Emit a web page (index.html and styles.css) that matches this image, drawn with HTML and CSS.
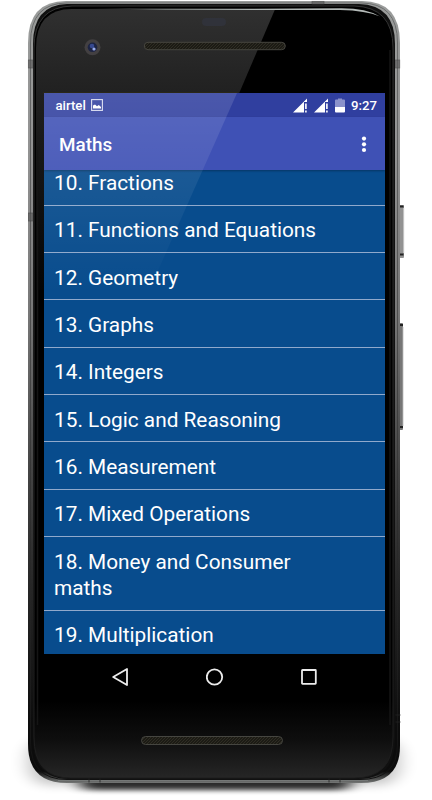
FILE: index.html
```html
<!DOCTYPE html>
<html lang="en">
<head>
<meta charset="utf-8">
<title>Maths</title>
<link rel="stylesheet" href="styles.css">
</head>
<body>
<div class="device">
  <svg class="frame" width="432" height="800" viewBox="0 0 432 800" aria-hidden="true">
    <defs>
      <linearGradient id="metal" x1="0" y1="0" x2="0" y2="1">
        <stop offset="0" stop-color="#9a9c9b"/><stop offset=".2" stop-color="#929292"/>
        <stop offset=".4" stop-color="#777"/><stop offset=".6" stop-color="#444"/>
        <stop offset=".75" stop-color="#262626"/><stop offset=".93" stop-color="#0c0c0c"/><stop offset=".985" stop-color="#0c0c0c"/><stop offset="1" stop-color="#747675"/>
      </linearGradient>
      <linearGradient id="rim" x1="0" y1="0" x2="0" y2="1">
        <stop offset="0" stop-color="#6c6e6e"/><stop offset=".3" stop-color="#5a5a5a"/><stop offset=".7" stop-color="#2b2b2b"/><stop offset="1" stop-color="#111"/>
      </linearGradient>
      <linearGradient id="glass" x1="0" y1="0" x2="0" y2="1">
        <stop offset="0" stop-color="#000"/><stop offset=".9" stop-color="#000"/><stop offset=".95" stop-color="#0e0e0e"/><stop offset="1" stop-color="#262626"/>
      </linearGradient>
      <linearGradient id="glareTop" x1="0" y1="0" x2="0" y2="1">
        <stop offset="0" stop-color="#303030"/><stop offset=".3" stop-color="#1f1f1f"/><stop offset="1" stop-color="#000"/>
      </linearGradient>
      <linearGradient id="shine" x1="0" y1="0" x2="1" y2="0">
        <stop offset="0" stop-color="#a8b0ae" stop-opacity="0"/><stop offset=".25" stop-color="#a8b0ae"/>
        <stop offset="1" stop-color="#b6bcba"/>
      </linearGradient>
      <linearGradient id="edge" x1="0" y1="0" x2="0" y2="1">
        <stop offset="0" stop-color="#333"/><stop offset="1" stop-color="#1c1c1c"/>
      </linearGradient>
      <pattern id="mesh" width="3" height="3" patternUnits="userSpaceOnUse">
        <rect width="3" height="3" fill="#1c1b15"/><path d="M0 3L3 0" stroke="#343127" stroke-width=".8"/>
      </pattern>
      <filter id="soft" x="-20%" y="-100%" width="140%" height="300%"><feGaussianBlur stdDeviation="9 2.500"/></filter>
      <filter id="wide" x="-20%" y="-100%" width="140%" height="300%"><feGaussianBlur stdDeviation="9 5"/></filter>
      <clipPath id="left"><path d="M0 0H279L155 290H0Z"/></clipPath>
    </defs>
    <rect x="28" y="738" width="372" height="47" rx="20" fill="#000" opacity=".22" filter="url(#wide)"/>
    <rect x="80" y="766" width="270" height="24" rx="8" fill="#000" opacity=".8" filter="url(#soft)"/>
    <rect x="399.500" y="205" width="4.500" height="53" rx="1" fill="#929292"/>
    <path d="M400 206.500h3.500M400 254.500h3.500" stroke="#222" stroke-width="2"/>
    <path d="M403.700 208v45" stroke="#ccc" stroke-width="1"/>
    <rect x="399.500" y="323" width="3.500" height="107" rx="1" fill="#777"/>
    <path d="M400 325h3M400 427h3" stroke="#222" stroke-width="2"/>
    <path d="M403 327v99" stroke="#bbb" stroke-width=".8"/>
    <path d="M66 1H362Q400 1 400 43V746Q400 783 361 783H67Q28 783 28 744V43Q28 1 66 1Z" fill="url(#metal)"/>
    <path d="M67 3H361Q397.500 3 397.500 43V744Q397.500 779.500 360 779.500H67Q30.500 779.500 30.500 742V43Q30.500 3 67 3Z" fill="none" stroke="url(#rim)" stroke-width="1"/>
    <path d="M67 4H359Q395 5 395 44V740Q395 779 358 779H69Q33 779 33 739V44Q33 5 67 4Z" fill="#101010"/>
    <path d="M72 6H354Q393 7 393 48V737Q393 778 354 778H71Q34 778 34 737V48Q34 7 72 6Z" fill="url(#glass)" stroke="url(#edge)" stroke-width="1"/>
    <path clip-path="url(#left)" d="M72 9H354Q391 9 391 48V320H36V48Q36 9 72 9Z" fill="url(#glareTop)"/>
    <path d="M390 50V725M37.500 150V725" stroke="#151515" stroke-width="1.500"/>
    <path d="M75 8.300Q205 9.300 340 8.300Q366 8 380 16.500Q366 10.500 340 10Q205 10.500 75 8.300Z" fill="url(#shine)"/>
    <path d="M58 780.500H368" stroke="#747776" stroke-width="1"/>
    <g fill="#555" stroke="#333" stroke-width=".7" opacity=".6">
      <rect x="28.300" y="60" width="4.500" height="8"/><rect x="395.500" y="60" width="4.300" height="8"/>
      <rect x="28.500" y="213" width="4.500" height="8"/><rect x="312" y="1.300" width="12" height="3"/>
    </g>
    <path d="M395.500 715h5M395.500 722h5M89 778.500v4M100 778.500v4M329 778.500v4M340 778.500v4" stroke="#252525" stroke-width=".8"/>
    <rect x="144.300" y="42.300" width="141" height="7.400" rx="3.700" fill="url(#mesh)" stroke="#46453f" stroke-width="1"/>
    <rect x="141.500" y="736.500" width="141" height="8" rx="4" fill="url(#mesh)" stroke="#454540" stroke-width="1"/>
    <rect x="202" y="18" width="24" height="8" rx="4" fill="#30323a"/>
    <circle cx="92.500" cy="47.300" r="8" fill="#434042"/>
    <circle cx="92.500" cy="47.300" r="4.800" fill="#1d2443"/>
    <circle cx="92" cy="46" r="2.300" fill="#374990"/><circle cx="94" cy="49" r="1.600" fill="#9aadef"/>
    <rect x="43" y="92.300" width="195" height="1" fill="#302b16"/>
  </svg>

  <main class="screen">
    <header class="status">
      <span class="carrier">airtel</span>
      <svg class="picture" width="12" height="12" viewBox="0 0 12 12"><rect x=".6" y=".6" width="10.800" height="10.800" fill="none" stroke="#d9dcf0" stroke-width="1.100"/><path d="M2 9.500V6.500L4 5.500l2 1.700L7.800 6 10 8V9.500Z" fill="#fff"/></svg>
      <span class="spacer"></span>
      <svg class="signal" width="15" height="15" viewBox="0 0 15 15"><path d="M0 14.500L14 .5V4H11V14.500Z" fill="#fff"/><path d="M12.900 5.500V11M12.900 12.500V14.500" stroke="#fff" stroke-width="1.600"/></svg>
      <svg class="signal second" width="15" height="15" viewBox="0 0 15 15"><path d="M0 14.500L14 .5V4H11V14.500Z" fill="#fff"/><path d="M12.900 5.500V11M12.900 12.500V14.500" stroke="#fff" stroke-width="1.600"/></svg>
      <svg class="battery" width="10" height="15" viewBox="0 0 10 15"><path d="M0 2.500Q0 1.500 1 1.500H3V.5H7V1.500H9Q10 1.500 10 2.500V9H0Z" fill="#8b92cb"/><path d="M0 9H10V13.500Q10 14.500 9 14.500H1Q0 14.500 0 13.500Z" fill="#fff"/></svg>
      <time class="clock">9:27</time>
    </header>
    <div class="appbar">
      <h1>Maths</h1>
      <svg width="6" height="18" viewBox="0 0 6 18" fill="#fff"><circle cx="3" cy="2.600" r="2.100"/><circle cx="3" cy="8.300" r="2.100"/><circle cx="3" cy="14" r="2.100"/></svg>
    </div>
    <ul class="topics">
      <li class="first">10. Fractions</li>
      <li>11. Functions and Equations</li>
      <li>12. Geometry</li>
      <li>13. Graphs</li>
      <li>14. Integers</li>
      <li>15. Logic and Reasoning</li>
      <li>16. Measurement</li>
      <li>17. Mixed Operations</li>
      <li class="double">18. Money and Consumer<br>maths</li>
      <li>19. Multiplication</li>
    </ul>
    <div class="glare"></div>
  </main>
  <nav class="navbar">
    <svg width="17" height="18" viewBox="0 0 17 18"><path d="M1.200 9L15 1V17Z"/></svg>
    <svg width="18" height="18" viewBox="0 0 18 18"><circle cx="8.500" cy="9" r="7.700"/></svg>
    <svg width="16" height="16" viewBox="0 0 16 16"><rect x="1" y="1" width="13.800" height="13.800" rx=".5"/></svg>
  </nav>
</div>
</body>
</html>
```
FILE: styles.css
```css
* { box-sizing: border-box; }
body { margin: 0; background: #fff; font-family: Roboto, sans-serif; color: #fff; }
.device { position: relative; width: 432px; height: 800px; padding: 93px 47px 0 44px; overflow: hidden; }
.frame { position: absolute; top: 0; left: 0; }
.screen { position: relative; width: 341px; height: 561px; overflow: hidden; background: #084c8d; }
svg { display: block; flex: none; }
.status { display: flex; align-items: center; height: 24px; padding: 0 8px 0 11.5px; background: #303f9f; }
.carrier, .clock { font-size: 13.2px; font-weight: 500; line-height: 24px; }
.clock { margin-left: 6px; padding-top: 1px; }
.carrier { padding-top: 1px; }
.picture { margin-left: 5px; }
.spacer { flex: 1; }
.second { margin-left: 6px; }
.battery { margin-left: 6px; }
.appbar { position: relative; display: flex; align-items: center; justify-content: space-between; height: 53px; padding: 2px 18px 0 15px; background: #3f51b5; box-shadow: 0 1px 2px rgba(0, 0, 0, .3); }
h1 { margin: 0; font-size: 18.9px; font-weight: 500; line-height: 24px; }
.topics { margin: 0; padding: 0; list-style: none; font-size: 20.8px; line-height: 26px; }
.topics li { height: 47.35px; padding: 11.8px 10px 0; border-bottom: 1px solid #90a9cc; white-space: nowrap; }
.topics .first { height: 35.6px; padding-top: 0; }
.topics .double { height: 73.6px; }
.glare { position: absolute; inset: 0; background: linear-gradient(180deg, rgba(255, 255, 255, .13), rgba(255, 255, 255, .08) 75px, transparent 200px); clip-path: polygon(0 0, 193px 0, 104px 200px, 0 200px); }
.navbar { position: relative; display: flex; align-items: center; justify-content: space-between; height: 46px; padding: 0 68px 0 68px; width: 341px; }
.navbar svg { fill: none; stroke: #ececec; stroke-width: 1.8; stroke-linejoin: round; }
```
